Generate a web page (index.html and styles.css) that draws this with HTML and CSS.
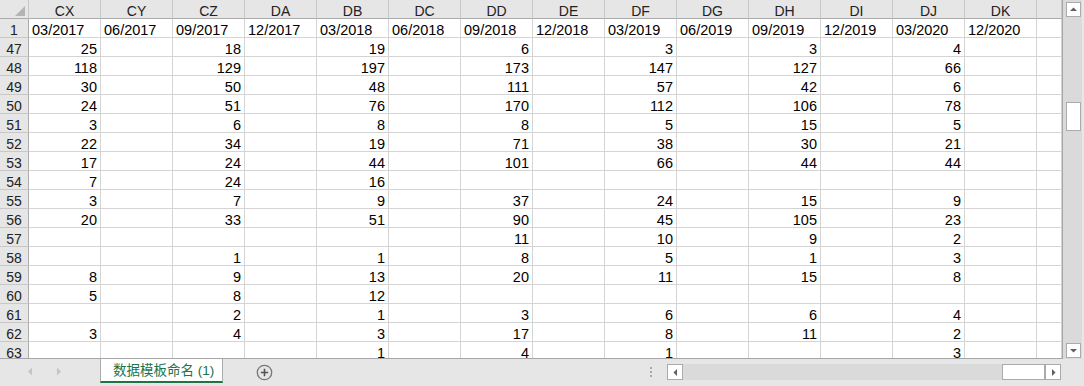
FILE: index.html
```html
<!DOCTYPE html>
<html lang="zh">
<head>
<meta charset="utf-8">
<title>数据模板命名 (1)</title>
<link rel="stylesheet" href="styles.css">
</head>
<body>
<div class="app">
  <div class="main">
    <div class="sheet">
      <div class="grid">
        <div class="corner"><span class="tri"></span></div>
        <div class="ch">CX</div><div class="ch">CY</div><div class="ch">CZ</div><div class="ch">DA</div><div class="ch">DB</div><div class="ch">DC</div><div class="ch">DD</div><div class="ch">DE</div><div class="ch">DF</div><div class="ch">DG</div><div class="ch">DH</div><div class="ch">DI</div><div class="ch">DJ</div><div class="ch">DK</div><div class="ch"></div>

        <div class="rh r1">1</div><div class="c t r1">03/2017</div><div class="c t r1">06/2017</div><div class="c t r1">09/2017</div><div class="c t r1">12/2017</div><div class="c t r1">03/2018</div><div class="c t r1">06/2018</div><div class="c t r1">09/2018</div><div class="c t r1">12/2018</div><div class="c t r1">03/2019</div><div class="c t r1">06/2019</div><div class="c t r1">09/2019</div><div class="c t r1">12/2019</div><div class="c t r1">03/2020</div><div class="c t r1">12/2020</div><div class="c r1"></div>

        <div class="rh">47</div><div class="c n">25</div><div class="c"></div><div class="c n">18</div><div class="c"></div><div class="c n">19</div><div class="c"></div><div class="c n">6</div><div class="c"></div><div class="c n">3</div><div class="c"></div><div class="c n">3</div><div class="c"></div><div class="c n">4</div><div class="c"></div><div class="c"></div>
        <div class="rh">48</div><div class="c n">118</div><div class="c"></div><div class="c n">129</div><div class="c"></div><div class="c n">197</div><div class="c"></div><div class="c n">173</div><div class="c"></div><div class="c n">147</div><div class="c"></div><div class="c n">127</div><div class="c"></div><div class="c n">66</div><div class="c"></div><div class="c"></div>
        <div class="rh">49</div><div class="c n">30</div><div class="c"></div><div class="c n">50</div><div class="c"></div><div class="c n">48</div><div class="c"></div><div class="c n">111</div><div class="c"></div><div class="c n">57</div><div class="c"></div><div class="c n">42</div><div class="c"></div><div class="c n">6</div><div class="c"></div><div class="c"></div>
        <div class="rh">50</div><div class="c n">24</div><div class="c"></div><div class="c n">51</div><div class="c"></div><div class="c n">76</div><div class="c"></div><div class="c n">170</div><div class="c"></div><div class="c n">112</div><div class="c"></div><div class="c n">106</div><div class="c"></div><div class="c n">78</div><div class="c"></div><div class="c"></div>
        <div class="rh">51</div><div class="c n">3</div><div class="c"></div><div class="c n">6</div><div class="c"></div><div class="c n">8</div><div class="c"></div><div class="c n">8</div><div class="c"></div><div class="c n">5</div><div class="c"></div><div class="c n">15</div><div class="c"></div><div class="c n">5</div><div class="c"></div><div class="c"></div>
        <div class="rh">52</div><div class="c n">22</div><div class="c"></div><div class="c n">34</div><div class="c"></div><div class="c n">19</div><div class="c"></div><div class="c n">71</div><div class="c"></div><div class="c n">38</div><div class="c"></div><div class="c n">30</div><div class="c"></div><div class="c n">21</div><div class="c"></div><div class="c"></div>
        <div class="rh">53</div><div class="c n">17</div><div class="c"></div><div class="c n">24</div><div class="c"></div><div class="c n">44</div><div class="c"></div><div class="c n">101</div><div class="c"></div><div class="c n">66</div><div class="c"></div><div class="c n">44</div><div class="c"></div><div class="c n">44</div><div class="c"></div><div class="c"></div>
        <div class="rh">54</div><div class="c n">7</div><div class="c"></div><div class="c n">24</div><div class="c"></div><div class="c n">16</div><div class="c"></div><div class="c"></div><div class="c"></div><div class="c"></div><div class="c"></div><div class="c"></div><div class="c"></div><div class="c"></div><div class="c"></div><div class="c"></div>
        <div class="rh">55</div><div class="c n">3</div><div class="c"></div><div class="c n">7</div><div class="c"></div><div class="c n">9</div><div class="c"></div><div class="c n">37</div><div class="c"></div><div class="c n">24</div><div class="c"></div><div class="c n">15</div><div class="c"></div><div class="c n">9</div><div class="c"></div><div class="c"></div>
        <div class="rh">56</div><div class="c n">20</div><div class="c"></div><div class="c n">33</div><div class="c"></div><div class="c n">51</div><div class="c"></div><div class="c n">90</div><div class="c"></div><div class="c n">45</div><div class="c"></div><div class="c n">105</div><div class="c"></div><div class="c n">23</div><div class="c"></div><div class="c"></div>
        <div class="rh">57</div><div class="c"></div><div class="c"></div><div class="c"></div><div class="c"></div><div class="c"></div><div class="c"></div><div class="c n">11</div><div class="c"></div><div class="c n">10</div><div class="c"></div><div class="c n">9</div><div class="c"></div><div class="c n">2</div><div class="c"></div><div class="c"></div>
        <div class="rh">58</div><div class="c"></div><div class="c"></div><div class="c n">1</div><div class="c"></div><div class="c n">1</div><div class="c"></div><div class="c n">8</div><div class="c"></div><div class="c n">5</div><div class="c"></div><div class="c n">1</div><div class="c"></div><div class="c n">3</div><div class="c"></div><div class="c"></div>
        <div class="rh">59</div><div class="c n">8</div><div class="c"></div><div class="c n">9</div><div class="c"></div><div class="c n">13</div><div class="c"></div><div class="c n">20</div><div class="c"></div><div class="c n">11</div><div class="c"></div><div class="c n">15</div><div class="c"></div><div class="c n">8</div><div class="c"></div><div class="c"></div>
        <div class="rh">60</div><div class="c n">5</div><div class="c"></div><div class="c n">8</div><div class="c"></div><div class="c n">12</div><div class="c"></div><div class="c"></div><div class="c"></div><div class="c"></div><div class="c"></div><div class="c"></div><div class="c"></div><div class="c"></div><div class="c"></div><div class="c"></div>
        <div class="rh">61</div><div class="c"></div><div class="c"></div><div class="c n">2</div><div class="c"></div><div class="c n">1</div><div class="c"></div><div class="c n">3</div><div class="c"></div><div class="c n">6</div><div class="c"></div><div class="c n">6</div><div class="c"></div><div class="c n">4</div><div class="c"></div><div class="c"></div>
        <div class="rh">62</div><div class="c n">3</div><div class="c"></div><div class="c n">4</div><div class="c"></div><div class="c n">3</div><div class="c"></div><div class="c n">17</div><div class="c"></div><div class="c n">8</div><div class="c"></div><div class="c n">11</div><div class="c"></div><div class="c n">2</div><div class="c"></div><div class="c"></div>
        <div class="rh">63</div><div class="c"></div><div class="c"></div><div class="c"></div><div class="c"></div><div class="c n">1</div><div class="c"></div><div class="c n">4</div><div class="c"></div><div class="c n">1</div><div class="c"></div><div class="c"></div><div class="c"></div><div class="c n">3</div><div class="c"></div><div class="c"></div>
      </div>
    </div>
    <div class="vscroll">
      <div class="sbtn"><svg width="13" height="13" viewBox="0 0 13 13"><path d="M3 8 L10 8 L6.5 4.5 Z" fill="#606060"/></svg></div>
      <div class="vthumb"></div>
      <div class="vspace"></div>
      <div class="sbtn"><svg width="13" height="13" viewBox="0 0 13 13"><path d="M3 5 L10 5 L6.5 8.5 Z" fill="#606060"/></svg></div>
    </div>
  </div>
  <div class="bottom">
    <div class="tabnav">
      <svg class="navl" width="6" height="9" viewBox="0 0 6 9"><path d="M5 0.5 L5 8.5 L1 4.5 Z" fill="#c4c4c4"/></svg>
      <svg class="navr" width="6" height="9" viewBox="0 0 6 9"><path d="M1 0.5 L1 8.5 L5 4.5 Z" fill="#c4c4c4"/></svg>
    </div>
    <div class="tab">数据模板命名 (1)</div>
    <div class="addsheet"><svg width="17" height="17" viewBox="0 0 17 17"><circle cx="8.5" cy="8.5" r="7.2" fill="none" stroke="#777" stroke-width="1.3"/><path d="M8.5 4.8 V12.2 M4.8 8.5 H12.2" stroke="#555" stroke-width="1.6"/></svg></div>
    <div class="spacer"></div>
    <div class="dots"><i></i><i></i><i></i></div>
    <div class="hscroll">
      <div class="sbtn h"><svg width="13" height="13" viewBox="0 0 13 13"><path d="M8 3 L8 10 L4.5 6.5 Z" fill="#606060"/></svg></div>
      <div class="hspace"></div>
      <div class="hthumb"></div>
      <div class="sbtn h"><svg width="13" height="13" viewBox="0 0 13 13"><path d="M5 3 L5 10 L8.5 6.5 Z" fill="#606060"/></svg></div>
    </div>
  </div>
</div>
</body>
</html>
```

FILE: styles.css
```css
* { box-sizing: border-box; }
html, body { margin: 0; padding: 0; }
body {
  width: 1084px;
  height: 386px;
  overflow: hidden;
  background: #e6e6e6;
  font-family: "Liberation Sans", Arial, "Noto Sans CJK SC", sans-serif;
}
.app { display: flex; flex-direction: column; width: 1084px; height: 386px; }
.main { display: flex; height: 359px; }
.sheet {
  width: 1063px;
  height: 359px;
  overflow: hidden;
  background: #fff;
  border-right: 1px solid #a6a6a6;
  border-bottom: 1px solid #a6a6a6;
}
.grid {
  display: grid;
  grid-template-columns: 29px repeat(14, 72px) 25px;
  grid-auto-rows: 19px;
}
.grid > div {
  border-right: 1px solid #d4d4d4;
  border-bottom: 1px solid #d4d4d4;
  white-space: nowrap;
  overflow: visible;
}
.corner { background: #e6e6e6; position: relative; }
.grid > .corner { border-right-color: #c8c8c8; border-bottom-color: #ababab; }
.tri {
  position: absolute;
  right: 3px;
  bottom: 2px;
  width: 0;
  height: 0;
  border-left: 10px solid transparent;
  border-bottom: 10px solid #b4b4b4;
}
.ch {
  background: #e6e6e6;
  font-size: 14px;
  line-height: 18px;
  padding-top: 2px;
  text-align: center;
  color: #222;
}
.grid > .ch { border-right-color: #c8c8c8; border-bottom-color: #ababab; }
.rh {
  background: #e6e6e6;
  font-size: 14px;
  line-height: 18px;
  padding-top: 2px;
  text-align: center;
  color: #222;
}
.grid > .rh { border-right-color: #ababab; border-bottom-color: #c8c8c8; }
.c {
  font-size: 14.5px;
  line-height: 18px;
  padding-top: 2px;
  color: #000;
}
.t { padding-left: 3px; }
.n { text-align: right; padding-right: 3px; }

.vscroll {
  width: 21px;
  height: 359px;
  background: #dadada;
  border-right: 2px solid #e8e8e8;
  display: flex;
  flex-direction: column;
  padding: 2px 0 1px 3px;
}
.sbtn {
  width: 15px;
  height: 15px;
  background: #fff;
  border: 1px solid #ababab;
  display: flex;
  align-items: center;
  justify-content: center;
  flex: none;
}
.vthumb {
  width: 15px;
  height: 29px;
  margin-top: 85px;
  background: #fff;
  border: 1px solid #ababab;
  flex: none;
}
.vspace { flex: 1; }

.bottom { display: flex; height: 27px; align-items: flex-start; }
.tabnav { width: 100px; height: 24px; display: flex; align-items: center; padding-left: 27px; padding-top: 1px; }
.navr { margin-left: 23px; }
.tab {
  width: 123px;
  height: 24px;
  background: #fff;
  border-left: 1px solid #ababab;
  border-right: 1px solid #ababab;
  border-bottom: 2px solid #217346;
  color: #217346;
  font-size: 13.5px;
  line-height: 20px;
  padding-top: 2px;
  padding-left: 12px;
  white-space: nowrap;
}
.addsheet { margin-left: 33px; margin-top: 5px; width: 17px; height: 17px; display: flex; }
.spacer { flex: 1; }
.dots {
  width: 3px;
  margin-top: 8px;
  display: flex;
  flex-direction: column;
  gap: 2px;
  margin-right: 14px;
}
.dots i { display: block; width: 2px; height: 2px; background: #a8a8a8; }
.hscroll {
  width: 394px;
  height: 16px;
  margin-top: 5px;
  margin-right: 23px;
  background: #dadada;
  display: flex;
}
.sbtn.h { width: 16px; height: 16px; }
.hspace { flex: 1; }
.hthumb {
  width: 43px;
  height: 16px;
  background: #fff;
  border: 1px solid #ababab;
  margin-right: 0;
}
```
